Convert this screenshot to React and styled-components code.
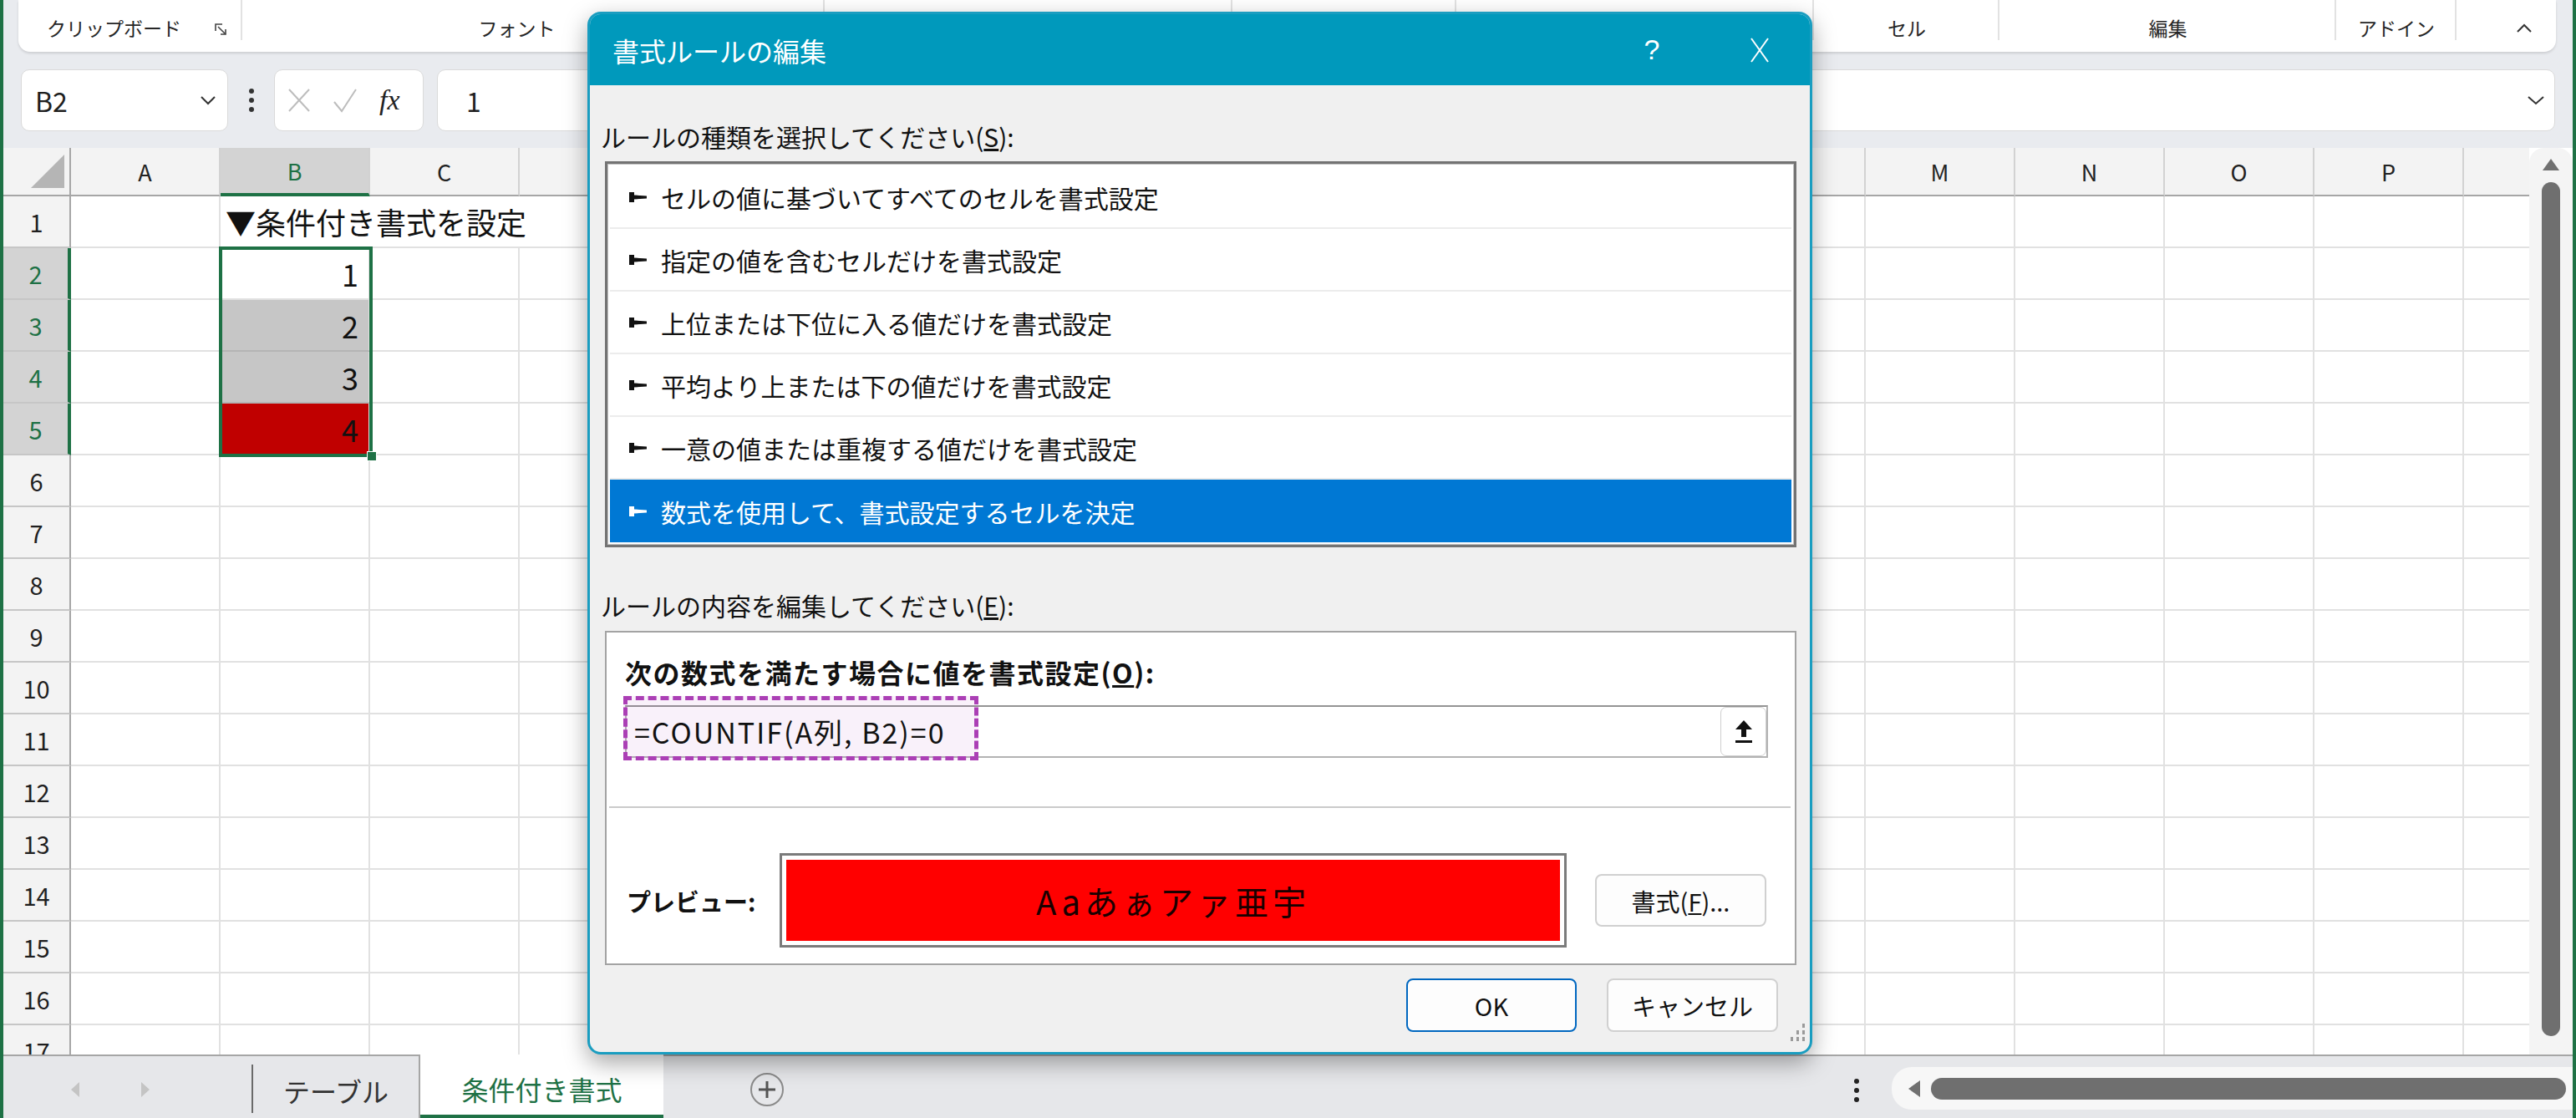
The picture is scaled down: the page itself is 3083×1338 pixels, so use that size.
import styled, { createGlobalStyle } from 'styled-components';

const JP = `"Noto Sans CJK JP", "Noto Sans", sans-serif`;
const GREEN = '#1e7145';
const COLS = ['A', 'B', 'C', 'D', 'E', 'F', 'G', 'H', 'I', 'J', 'K', 'L', 'M', 'N', 'O', 'P', 'Q'];
// columns D..L sit under the dialog, Q is clipped: their letters are not visible
const HIDDEN_HEADS = ['D', 'E', 'F', 'G', 'H', 'I', 'J', 'K', 'L', 'Q'];
const ROWS = Array.from({ length: 17 }, (_, i) => i + 1);

const RULES = [
    'セルの値に基づいてすべてのセルを書式設定',
    '指定の値を含むセルだけを書式設定',
    '上位または下位に入る値だけを書式設定',
    '平均より上または下の値だけを書式設定',
    '一意の値または重複する値だけを書式設定',
    '数式を使用して、書式設定するセルを決定',
];

// groups under the dialog keep their width but show no label
const RIBBON_GROUPS = [
    { id: 'clip', label: 'クリップボード', w: 268, launcher: true },
    { id: 'font', label: 'フォント', w: 697, pr: 40 },
    { id: 'align', label: '', w: 488 },
    { id: 'num', label: '', w: 268 },
    { id: 'style', label: '', w: 428 },
    { id: 'cell', label: 'セル', w: 222 },
    { id: 'edit', label: '編集', w: 403 },
    { id: 'addin', label: 'アドイン', w: 144 },
];

const SHEET = {
    B1: { text: '▼条件付き書式を設定', span: 3 },
    B2: { text: '1', num: true },
    B3: { text: '2', num: true, fill: '#c6c6c6' },
    B4: { text: '3', num: true, fill: '#c6c6c6' },
    B5: { text: '4', num: true, fill: '#c00000' },
};

function App() {
    return (
        <Window>
            <GlobalStyle />
            <Ribbon>
                {RIBBON_GROUPS.map(g => (
                    <RibbonGroup key={g.id} $w={g.w} $pr={g.pr} $launcher={g.launcher}>
                        {g.label && <span>{g.label}</span>}
                        {g.launcher && (
                            <svg width="15" height="15" viewBox="0 0 15 15">
                                <polyline points="1,9 1,1 9,1" fill="none" stroke="#444" strokeWidth="1.6" />
                                <line x1="4" y1="4" x2="13" y2="13" stroke="#444" strokeWidth="1.6" />
                                <polyline points="7,13 13,13 13,7" fill="none" stroke="#444" strokeWidth="1.6" />
                            </svg>
                        )}
                    </RibbonGroup>
                ))}
                <CollapseSlot>
                    <svg width="20" height="12" viewBox="0 0 20 12">
                        <polyline points="2,10 10,2 18,10" fill="none" stroke="#333" strokeWidth="2" />
                    </svg>
                </CollapseSlot>
            </Ribbon>

            <FormulaBar>
                <NameBox>
                    <span>B2</span>
                    <svg width="18" height="11" viewBox="0 0 18 11">
                        <polyline points="1,1 9,9 17,1" fill="none" stroke="#333" strokeWidth="2" />
                    </svg>
                </NameBox>
                <Kebab>
                    <svg width="8" height="30" viewBox="0 0 8 30">
                        <circle cx="4" cy="4" r="3" fill="#333" />
                        <circle cx="4" cy="15" r="3" fill="#333" />
                        <circle cx="4" cy="26" r="3" fill="#333" />
                    </svg>
                </Kebab>
                <FxBox>
                    <svg width="28" height="30" viewBox="0 0 28 30">
                        <line x1="2" y1="2" x2="26" y2="28" stroke="#bdbdbd" strokeWidth="2" />
                        <line x1="26" y1="2" x2="2" y2="28" stroke="#bdbdbd" strokeWidth="2" />
                    </svg>
                    <svg width="30" height="30" viewBox="0 0 30 30">
                        <polyline points="2,17 11,28 28,2" fill="none" stroke="#bdbdbd" strokeWidth="2" />
                    </svg>
                    <FxText>fx</FxText>
                </FxBox>
                <FormulaField>
                    <span>1</span>
                    <svg width="20" height="11" viewBox="0 0 20 11">
                        <polyline points="1,1 10,9 19,1" fill="none" stroke="#333" strokeWidth="2" />
                    </svg>
                </FormulaField>
            </FormulaBar>

            <Main>
                <SheetWrap>
                    <Sheet>
                        <Corner>
                            <svg width="40" height="40" viewBox="0 0 40 40">
                                <polygon points="40,0 40,40 0,40" fill="#b5b5b5" />
                            </svg>
                        </Corner>
                        {COLS.map(c => (
                            <ColHead key={c} $sel={c === 'B'}>
                                {HIDDEN_HEADS.includes(c) ? '' : c}
                            </ColHead>
                        ))}
                        {ROWS.map(r => {
                            const cells = [];
                            for (let i = 0; i < COLS.length; i++) {
                                const id = COLS[i] + r;
                                const d = SHEET[id];
                                cells.push(
                                    <Cell
                                        key={id}
                                        $span={d && d.span}
                                        $num={d && d.num}
                                        $fill={d && d.fill}
                                    >
                                        {d && d.text}
                                    </Cell>
                                );
                                if (d && d.span) i += d.span - 1;
                            }
                            return [
                                <RowHead key={'h' + r} $sel={r >= 2 && r <= 5}>
                                    {r}
                                </RowHead>,
                                ...cells,
                            ];
                        })}
                    </Sheet>
                    <Selection>
                        <FillHandle />
                    </Selection>
                </SheetWrap>
                <VScroll>
                    <svg width="22" height="16" viewBox="0 0 22 16">
                        <polygon points="11,1 21,15 1,15" fill="#707070" />
                    </svg>
                    <VThumb />
                </VScroll>
            </Main>

            <TabBar>
                <TabNav>
                    <svg width="12" height="20" viewBox="0 0 12 20">
                        <polygon points="11,1 11,19 1,10" fill="#c4c4c4" />
                    </svg>
                    <svg width="12" height="20" viewBox="0 0 12 20">
                        <polygon points="1,1 1,19 11,10" fill="#c4c4c4" />
                    </svg>
                </TabNav>
                <TabDivider />
                <SheetTab>テーブル</SheetTab>
                <SheetTab $active>条件付き書式</SheetTab>
                <AddSheet>
                    <svg width="42" height="42" viewBox="0 0 42 42">
                        <circle cx="21" cy="21" r="19" fill="none" stroke="#8a8a8a" strokeWidth="2" />
                        <line x1="21" y1="11" x2="21" y2="31" stroke="#555" strokeWidth="3" />
                        <line x1="11" y1="21" x2="31" y2="21" stroke="#555" strokeWidth="3" />
                    </svg>
                </AddSheet>
                <TabSpacer />
                <TabKebab>
                    <svg width="8" height="30" viewBox="0 0 8 30">
                        <circle cx="4" cy="4" r="3" fill="#222" />
                        <circle cx="4" cy="15" r="3" fill="#222" />
                        <circle cx="4" cy="26" r="3" fill="#222" />
                    </svg>
                </TabKebab>
                <HScroll>
                    <svg width="16" height="22" viewBox="0 0 16 22">
                        <polygon points="15,1 15,21 1,11" fill="#707070" />
                    </svg>
                    <HThumb />
                </HScroll>
            </TabBar>

            <Dialog>
                <TitleBar>
                    <TitleText>書式ルールの編集</TitleText>
                    <TitleButton>?</TitleButton>
                    <TitleButton>
                        <svg width="24" height="32" viewBox="0 0 24 32">
                            <line x1="2" y1="2" x2="22" y2="30" stroke="#fff" strokeWidth="2" />
                            <line x1="22" y1="2" x2="2" y2="30" stroke="#fff" strokeWidth="2" />
                        </svg>
                    </TitleButton>
                </TitleBar>
                <DialogBody>
                    <FieldLabel>
                        ルールの種類を選択してください(<u>S</u>):
                    </FieldLabel>
                    <RuleList>
                        {RULES.map((rule, i) => (
                            <RuleItem key={rule} $selected={i === RULES.length - 1}>
                                <svg width="21" height="12" viewBox="0 0 21 12">
                                    <path
                                        d="M0 0 H6 V3.5 L21 4.5 V7.5 L6 8.5 V12 H0 Z"
                                        fill={i === RULES.length - 1 ? '#fff' : '#111'}
                                    />
                                </svg>
                                <span>{rule}</span>
                            </RuleItem>
                        ))}
                    </RuleList>
                    <FieldLabel $top={49}>
                        ルールの内容を編集してください(<u>E</u>):
                    </FieldLabel>
                    <EditPanel>
                        <BoldLabel>
                            次の数式を満たす場合に値を書式設定(<u>O</u>):
                        </BoldLabel>
                        <FormulaInput>
                            <Highlight />
                            <FormulaText>=COUNTIF(A列, B2)=0</FormulaText>
                            <RefButton>
                                <svg width="24" height="30" viewBox="0 0 24 30">
                                    <polygon points="12,1 22,12 15,12 15,21 9,21 9,12 2,12" fill="#111" />
                                    <rect x="2" y="25" width="20" height="3" fill="#111" />
                                </svg>
                            </RefButton>
                        </FormulaInput>
                        <Divider />
                        <PreviewRow>
                            <PreviewLabel>プレビュー:</PreviewLabel>
                            <PreviewBox>
                                <PreviewFill>Aaあぁアァ亜宇</PreviewFill>
                            </PreviewBox>
                            <DialogButton $w={205}>
                                書式(<u>F</u>)...
                            </DialogButton>
                        </PreviewRow>
                    </EditPanel>
                    <ButtonRow>
                        <DialogButton $primary $w={204}>
                            OK
                        </DialogButton>
                        <DialogButton $w={205}>キャンセル</DialogButton>
                    </ButtonRow>
                </DialogBody>
                <Grip>
                    <svg width="22" height="30" viewBox="0 0 22 30">
                        {[
                            [17, 3],
                            [17, 11],
                            [10, 11],
                            [17, 19],
                            [10, 19],
                            [3, 19],
                        ].map(([x, y]) => (
                            <rect key={x + '-' + y} x={x} y={y} width="3" height="5" fill="#9a9a9a" />
                        ))}
                    </svg>
                </Grip>
            </Dialog>
        </Window>
    );
}

export default App;

const GlobalStyle = createGlobalStyle`
    *, *::before, *::after {
        box-sizing: border-box;
    }
    html, body {
        margin: 0;
        padding: 0;
        background: #e9ebef;
    }
    body {
        width: 3083px;
        height: 1338px;
        overflow: hidden;
        font-family: ${JP};
    }
`;

const Window = styled.div`
    position: relative;
    width: 3083px;
    height: 1338px;
    overflow: hidden;
    background: #e9ebef;
    border-left: 4px solid ${GREEN};
    border-right: 4px solid ${GREEN};
    display: flex;
    flex-direction: column;
    color: #1f1f1f;
`;

const Ribbon = styled.div`
    flex: none;
    height: 62px;
    margin: 0 20px 0 18px;
    background: #fff;
    border-radius: 0 0 14px 14px;
    box-shadow: 0 2px 3px rgba(0, 0, 0, 0.12);
    display: flex;
`;

const RibbonGroup = styled.div`
    position: relative;
    flex: none;
    width: ${p => p.$w}px;
    display: flex;
    align-items: flex-end;
    justify-content: ${p => (p.$launcher ? 'flex-end' : 'center')};
    gap: 40px;
    padding: 0 ${p => (p.$launcher ? 18 : p.$pr || 0)}px 14px 0;
    font-size: 23px;
    line-height: 30px;
    color: #262626;

    svg {
        margin-bottom: 5px;
    }

    &::after {
        content: '';
        position: absolute;
        right: 0;
        top: 0;
        width: 2px;
        height: 48px;
        background: #e2e2e2;
    }
`;

const CollapseSlot = styled.div`
    flex: 1;
    display: flex;
    align-items: center;
    justify-content: flex-end;
    padding: 6px 28px 0 0;
`;

const FormulaBar = styled.div`
    flex: none;
    height: 115px;
    padding: 21px 21px 20px 21px;
    display: flex;
    align-items: stretch;
`;

const WhiteBox = styled.div`
    background: #fff;
    border: 1px solid #dadada;
    border-radius: 10px;
    display: flex;
    align-items: center;
`;

const NameBox = styled(WhiteBox)`
    width: 248px;
    padding: 0 14px 0 16px;
    justify-content: space-between;
    font: 32px ${JP};
`;

const Kebab = styled.div`
    width: 55px;
    display: flex;
    align-items: center;
    justify-content: center;
`;

const FxBox = styled(WhiteBox)`
    width: 179px;
    padding-left: 15px;
    gap: 26px;
`;

const FxText = styled.span`
    font: italic 34px 'Liberation Serif', serif;
    color: #222;
`;

const FormulaField = styled(WhiteBox)`
    flex: 1;
    margin-left: 16px;
    padding: 0 12px 0 34px;
    justify-content: space-between;
    font: 32px ${JP};
`;

const Main = styled.div`
    flex: none;
    height: 1085px;
    display: flex;
    background: #fff;
`;

const SheetWrap = styled.div`
    position: relative;
    flex: 1;
    overflow: hidden;
`;

const Sheet = styled.div`
    display: grid;
    grid-template-columns: 81px repeat(17, 179px);
    grid-template-rows: 58px repeat(17, 62px);
`;

const Corner = styled.div`
    background: #f3f3f3;
    border-right: 2px solid #a6a6a6;
    border-bottom: 2px solid #a6a6a6;
    display: flex;
    align-items: flex-end;
    justify-content: flex-end;
    padding: 0 6px 8px 0;
`;

const ColHead = styled.div`
    background: ${p => (p.$sel ? '#d3d3d3' : '#f3f3f3')};
    color: ${p => (p.$sel ? GREEN : '#222')};
    border-right: 2px solid #d2d2d2;
    border-bottom: ${p => (p.$sel ? `4px solid ${GREEN}` : '2px solid #a6a6a6')};
    display: flex;
    align-items: center;
    justify-content: center;
    font: 27px ${JP};
`;

const RowHead = styled.div`
    background: ${p => (p.$sel ? '#d3d3d3' : '#f3f3f3')};
    color: ${p => (p.$sel ? GREEN : '#1f1f1f')};
    border-right: ${p => (p.$sel ? `4px solid ${GREEN}` : '2px solid #a6a6a6')};
    border-bottom: 2px solid #c6c6c6;
    display: flex;
    align-items: center;
    justify-content: center;
    font: 29px ${JP};
`;

const Cell = styled.div`
    grid-column: span ${p => p.$span || 1};
    background: ${p => p.$fill || '#fff'};
    border-right: 2px solid #e1e1e1;
    border-bottom: 2px solid ${p => (p.$fill ? '#b4b4b4' : '#e1e1e1')};
    display: flex;
    align-items: center;
    justify-content: ${p => (p.$num ? 'flex-end' : 'flex-start')};
    padding: 0 12px 0 6px;
    white-space: nowrap;
    font: 36px ${JP};
    color: #111;
`;

const Selection = styled.div`
    position: absolute;
    left: 258px;
    top: 118px;
    width: 184px;
    height: 252px;
    border: 4px solid ${GREEN};
    pointer-events: none;
`;

const FillHandle = styled.div`
    position: absolute;
    right: -9px;
    bottom: -9px;
    width: 12px;
    height: 12px;
    background: ${GREEN};
    border: 1px solid #fff;
`;

const VScroll = styled.div`
    flex: none;
    width: 52px;
    background: #f4f4f4;
    border-radius: 18px 18px 0 0;
    display: flex;
    flex-direction: column;
    align-items: center;
    padding-top: 12px;
    gap: 13px;
`;

const VThumb = styled.div`
    width: 22px;
    height: 1022px;
    border-radius: 11px;
    background: #6f6f6f;
`;

const TabBar = styled.div`
    flex: none;
    height: 76px;
    background: #e6e7ea;
    border-top: 2px solid #a6a6a6;
    display: flex;
    align-items: stretch;
`;

const TabNav = styled.div`
    width: 297px;
    display: flex;
    align-items: center;
    gap: 72px;
    padding: 6px 0 0 80px;
`;

const TabDivider = styled.div`
    width: 2px;
    margin: 10px 0 6px;
    background: #6a6a6a;
`;

const SheetTab = styled.div`
    width: ${p => (p.$active ? 291 : 200)}px;
    margin-top: ${p => (p.$active ? -2 : 0)}px;
    background: ${p => (p.$active ? '#fff' : 'transparent')};
    border-right: ${p => (p.$active ? 'none' : '2px solid #a6a6a6')};
    border-bottom: ${p => (p.$active ? `4px solid ${GREEN}` : 'none')};
    color: ${p => (p.$active ? GREEN : '#333')};
    display: flex;
    align-items: center;
    justify-content: center;
    padding-top: ${p => (p.$active ? 10 : 8)}px;
    font: 32px ${JP};
`;

const AddSheet = styled.div`
    display: flex;
    align-items: center;
    padding: 6px 0 0 103px;
`;

const TabSpacer = styled.div`
    flex: 1;
`;

const TabKebab = styled.div`
    width: 40px;
    display: flex;
    align-items: center;
    justify-content: center;
    padding-top: 8px;
`;

const HScroll = styled.div`
    width: 815px;
    margin: 13px 0 10px 22px;
    background: #f7f7f7;
    border-radius: 24px 0 0 24px;
    display: flex;
    align-items: center;
    gap: 12px;
    padding-left: 19px;
`;

const HThumb = styled.div`
    flex: 1;
    height: 26px;
    margin-right: 8px;
    border-radius: 13px;
    background: #6f6f6f;
`;

const Dialog = styled.div`
    position: absolute;
    left: 699px;
    top: 14px;
    width: 1466px;
    height: 1248px;
    border: 3px solid #1a9dc0;
    border-radius: 16px;
    overflow: hidden;
    background: #f0f0f0;
    box-shadow: 0 10px 28px rgba(0, 0, 0, 0.35);
    display: flex;
    flex-direction: column;
`;

const TitleBar = styled.div`
    flex: none;
    height: 85px;
    background: #0099bc;
    color: #fff;
    display: flex;
    align-items: center;
    padding: 0 20px 0 27px;
`;

const TitleText = styled.div`
    flex: 1;
    font: 32px ${JP};
`;

const TitleButton = styled.div`
    width: 80px;
    margin-left: 49px;
    display: flex;
    justify-content: center;
    font: 34px 'Liberation Sans', sans-serif;
`;

const DialogBody = styled.div`
    flex: 1;
    display: flex;
    flex-direction: column;
    padding: 41px 16px 24px 13px;
`;

const FieldLabel = styled.div`
    margin-top: ${p => p.$top || 0}px;
    font: 30px ${JP};
    line-height: 40px;
    color: #111;
`;

const RuleList = styled.div`
    margin: 10px 0 0 5px;
    height: 462px;
    background: #fff;
    border: 3px solid #737373;
    box-shadow: inset 0 0 0 1px #c3c3c3;
    padding: 3px 3px;
`;

const RuleItem = styled.div`
    height: 75px;
    display: flex;
    align-items: center;
    gap: 17px;
    padding-left: 23px;
    background: ${p => (p.$selected ? '#0078d4' : 'transparent')};
    color: ${p => (p.$selected ? '#fff' : '#111')};
    border-bottom: ${p => (p.$selected ? 'none' : '2px solid #ececec')};
    font: 30px ${JP};
`;

const EditPanel = styled.div`
    margin: 11px 0 0 5px;
    height: 400px;
    background: #fff;
    border: 2px solid #a3a3a3;
    padding: 27px 32px 0 22px;
    display: flex;
    flex-direction: column;
`;

const BoldLabel = styled.div`
    font: bold 32px ${JP};
    letter-spacing: 1.5px;
    line-height: 40px;
    color: #111;
`;

const FormulaInput = styled.div`
    position: relative;
    margin-top: 20px;
    height: 63px;
    border: 2px solid #b3b3b3;
    border-top-color: #949494;
    background: #fff;
    display: flex;
    align-items: center;
    padding-left: 9px;
`;

const Highlight = styled.div`
    position: absolute;
    left: -4px;
    top: -13px;
    width: 425px;
    height: 77px;
    border: 5px dashed #ab3fb5;
    background: rgba(171, 63, 181, 0.07);
`;

const FormulaText = styled.span`
    position: relative;
    font: 34px ${JP};
    letter-spacing: 2px;
    color: #111;
`;

const RefButton = styled.div`
    margin-left: auto;
    width: 55px;
    height: 59px;
    border: 1px solid #cfcfcf;
    border-radius: 7px;
    background: #fff;
    display: flex;
    align-items: center;
    justify-content: center;
`;

const Divider = styled.div`
    margin: 58px -27px 0 -19px;
    height: 2px;
    background: #cbcbcb;
`;

const PreviewRow = styled.div`
    margin-top: 54px;
    height: 113px;
    display: flex;
    align-items: center;
`;

const PreviewLabel = styled(BoldLabel)`
    width: 185px;
    font-size: 29px;
    letter-spacing: 0;
    padding-left: 2px;
`;

const PreviewBox = styled.div`
    width: 942px;
    height: 113px;
    border: 3px solid #7b7b7b;
    padding: 5px;
    background: #fff;
`;

const PreviewFill = styled.div`
    height: 100%;
    background: #ff0000;
    display: flex;
    align-items: center;
    justify-content: center;
    font: 40px ${JP};
    letter-spacing: 5px;
    color: #1a0000;
`;

const DialogButton = styled.div`
    width: ${p => p.$w}px;
    height: 63px;
    margin-left: 34px;
    border: 2px solid ${p => (p.$primary ? '#0067c0' : '#d0d0d0')};
    border-radius: 8px;
    background: #fdfdfd;
    display: flex;
    align-items: center;
    justify-content: center;
    font: 29px ${JP};
    color: #111;
`;

const ButtonRow = styled.div`
    margin-top: 16px;
    display: flex;
    justify-content: flex-end;
    gap: 2px;
    padding-right: 22px;

    & > * {
        height: 64px;
    }
`;

const Grip = styled.div`
    position: absolute;
    right: 4px;
    bottom: 2px;
`;
